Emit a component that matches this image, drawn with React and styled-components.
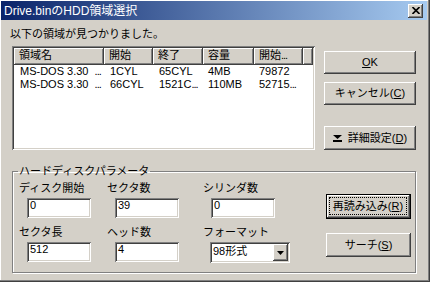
import React from 'react';
import styled, { createGlobalStyle, css } from 'styled-components';

const face = '#d4d0c8';

const GlobalStyle = createGlobalStyle`
  html, body {
    margin: 0;
    padding: 0;
    background: #d4d0c8;
  }
  body {
    font-family: "Liberation Sans", "Noto Sans CJK JP", sans-serif;
    font-size: 11px;
    color: #000;
  }
`;

const raised = css`
  background: ${face};
  box-shadow: inset -1px -1px 0 #404040, inset 1px 1px 0 #fff,
    inset -2px -2px 0 #808080, inset 2px 2px 0 ${face};
`;

const sunken = css`
  background: #fff;
  box-shadow: inset 1px 1px 0 #808080, inset -1px -1px 0 #fff,
    inset 2px 2px 0 #404040, inset -2px -2px 0 ${face};
`;

const Window = styled.div`
  box-sizing: border-box;
  width: 430px;
  height: 282px;
  display: flex;
  flex-direction: column;
  background: ${face};
  padding: 1px 2px 2px 1px;
  border-right: 1px solid #404040;
  border-bottom: 1px solid #404040;
  box-shadow: inset -1px -1px 0 #808080, inset 1px 1px 0 #fff;
`;

const TitleBar = styled.div`
  height: 19px;
  display: flex;
  align-items: center;
  justify-content: space-between;
  padding: 0 4px 0 3px;
  background: linear-gradient(to right, #0a246a, #a6caf0);
  color: #fff;
  font-size: 12px;
  line-height: 14px;
`;

const CloseBtn = styled.span`
  box-sizing: border-box;
  width: 15px;
  height: 14px;
  ${raised};
  display: flex;
  align-items: center;
  justify-content: center;
`;

const Body = styled.div`
  flex: 1;
  display: flex;
  flex-direction: column;
  padding: 8px 11px 0 11px;
`;

const TopRow = styled.div`
  display: flex;
  justify-content: space-between;
  align-items: flex-start;
`;

const LeftPane = styled.div`
  display: flex;
  flex-direction: column;
`;

const Caption = styled.div`
  line-height: 13px;
  margin: 0 0 5px -2px;
`;

const ListView = styled.div`
  box-sizing: border-box;
  width: 303px;
  height: 104px;
  padding: 2px;
  ${sunken};
`;

const Row = styled.div`
  display: grid;
  grid-template-columns: 90px 49px 50px 51px 49px 1fr;
`;

const HeadCell = styled.div`
  box-sizing: border-box;
  height: 17px;
  line-height: 15px;
  padding: 0 5px;
  white-space: nowrap;
  overflow: hidden;
  ${raised};
`;

const Cell = styled.div`
  line-height: 13px;
  padding: 0 ${p => p.$pad ?? 5}px;
  white-space: pre;
  overflow: hidden;
`;

const Dots = styled.span`
  letter-spacing: -1px;
`;

const ButtonCol = styled.div`
  display: flex;
  flex-direction: column;
  margin-top: ${p => p.$top}px;
`;

const Button = styled.button`
  box-sizing: border-box;
  width: ${p => p.$w}px;
  height: ${p => p.$h || 23}px;
  margin: ${p => p.$mt || 0}px 0 0 0;
  padding: ${p => (p.$default ? '2px 3px 3px 2px' : '0')};
  border: ${p => (p.$default ? '1px solid #000' : 'none')};
  ${raised};
  font: inherit;
  color: #000;
  line-height: 13px;
  display: flex;
  align-items: center;
  justify-content: center;
  gap: 6px;
`;

const Focus = styled.span`
  flex: 1;
  align-self: stretch;
  border: 1px dotted #000;
  display: flex;
  align-items: center;
  justify-content: center;
`;

const Key = styled.span`
  text-decoration: underline;
`;

const GroupBox = styled.fieldset`
  margin: 15px 0 0 0;
  padding: 4px 4px 9px 6px;
  border: 1px solid #808080;
  box-shadow: 1px 1px 0 #fff, inset 1px 1px 0 #fff;
  display: flex;
  justify-content: space-between;
  align-items: flex-start;
`;

const Legend = styled.legend`
  padding: 0 1px;
  margin-left: -1px;
  line-height: 13px;
`;

const FieldGrid = styled.div`
  display: grid;
  grid-template-columns: 88px 96px 90px;
  row-gap: 8px;
`;

const Field = styled.div`
  display: flex;
  flex-direction: column;
  align-items: flex-start;
`;

const FieldLabel = styled.span`
  line-height: 13px;
`;

const TextBox = styled.div`
  box-sizing: border-box;
  width: 64px;
  height: 20px;
  margin: 3px 0 0 8px;
  padding: 1px 3px 0;
  line-height: 13px;
  ${sunken};
`;

const Combo = styled.div`
  box-sizing: border-box;
  width: 80px;
  height: 21px;
  margin: 3px 0 0 7px;
  padding: 2px;
  display: flex;
  ${sunken};
`;

const ComboText = styled.span`
  flex: 1;
  padding: 1px 1px 0;
  line-height: 13px;
`;

const DropBtn = styled.span`
  width: 15px;
  ${raised};
  display: flex;
  align-items: center;
  justify-content: center;
`;

const rows = [
  ['MS-DOS 3.30  ', '1CYL', '65CYL', '4MB', '79872'],
  ['MS-DOS 3.30  ', '66CYL', '1521C', '110MB', '52715'],
];

const fields = [
  ['ディスク開始', '0'],
  ['セクタ数', '39'],
  ['シリンダ数', '0'],
  ['セクタ長', '512'],
  ['ヘッド数', '4'],
];

function DownArrow() {
  return (
    <svg width="7" height="4" viewBox="0 0 7 4">
      <polygon points="0,0 7,0 3.5,4" fill="#000" />
    </svg>
  );
}

export default function App() {
  return (
    <>
      <GlobalStyle />
      <Window>
        <TitleBar>
          <span>Drive.binのHDD領域選択</span>
          <CloseBtn>
            <svg width="8" height="7" viewBox="0 0 8 7">
              <path d="M0.5 0 L7.5 7 M7.5 0 L0.5 7" stroke="#000" strokeWidth="1.6" />
            </svg>
          </CloseBtn>
        </TitleBar>
        <Body>
          <TopRow>
            <LeftPane>
              <Caption>以下の領域が見つかりました。</Caption>
              <ListView>
                <Row>
                  <HeadCell>領域名</HeadCell>
                  <HeadCell>開始</HeadCell>
                  <HeadCell>終了</HeadCell>
                  <HeadCell>容量</HeadCell>
                  <HeadCell>開始<Dots>...</Dots></HeadCell>
                  <HeadCell />
                </Row>
                {rows.map((r, i) => (
                  <Row key={i}>
                    <Cell $pad={6}>{r[0]}<Dots>...</Dots></Cell>
                    <Cell $pad={6}>{r[1]}</Cell>
                    <Cell $pad={6}>{r[2]}{i === 1 && <Dots>...</Dots>}</Cell>
                    <Cell>{r[3]}</Cell>
                    <Cell>{r[4]}{i === 1 && <Dots>...</Dots>}</Cell>
                    <Cell />
                  </Row>
                ))}
              </ListView>
            </LeftPane>
            <ButtonCol $top={23}>
              <Button $w={92}><span><Key>O</Key>K</span></Button>
              <Button $w={92} $mt={8}><span>キャンセル(<Key>C</Key>)</span></Button>
              <Button $w={92} $h={24} $mt={21}>
                <svg width="9" height="7" viewBox="0 0 9 7">
                  <polygon points="0,0 9,0 4.5,4" fill="#000" />
                  <rect x="0" y="5" width="9" height="2" fill="#000" />
                </svg>
                <span>詳細設定(<Key>D</Key>)</span>
              </Button>
            </ButtonCol>
          </TopRow>
          <GroupBox>
            <Legend>ハードディスクパラメータ</Legend>
            <FieldGrid>
              {fields.map(([label, value]) => (
                <Field key={label}>
                  <FieldLabel>{label}</FieldLabel>
                  <TextBox>{value}</TextBox>
                </Field>
              ))}
              <Field>
                <FieldLabel>フォーマット</FieldLabel>
                <Combo>
                  <ComboText>98形式</ComboText>
                  <DropBtn><DownArrow /></DropBtn>
                </Combo>
              </Field>
            </FieldGrid>
            <ButtonCol $top={12}>
              <Button $w={85} $h={25} $default>
                <Focus>再読み込み(<Key>R</Key>)</Focus>
              </Button>
              <Button $w={85} $h={24} $mt={14}>
                <span>サーチ(<Key>S</Key>)</span>
              </Button>
            </ButtonCol>
          </GroupBox>
        </Body>
      </Window>
    </>
  );
}
